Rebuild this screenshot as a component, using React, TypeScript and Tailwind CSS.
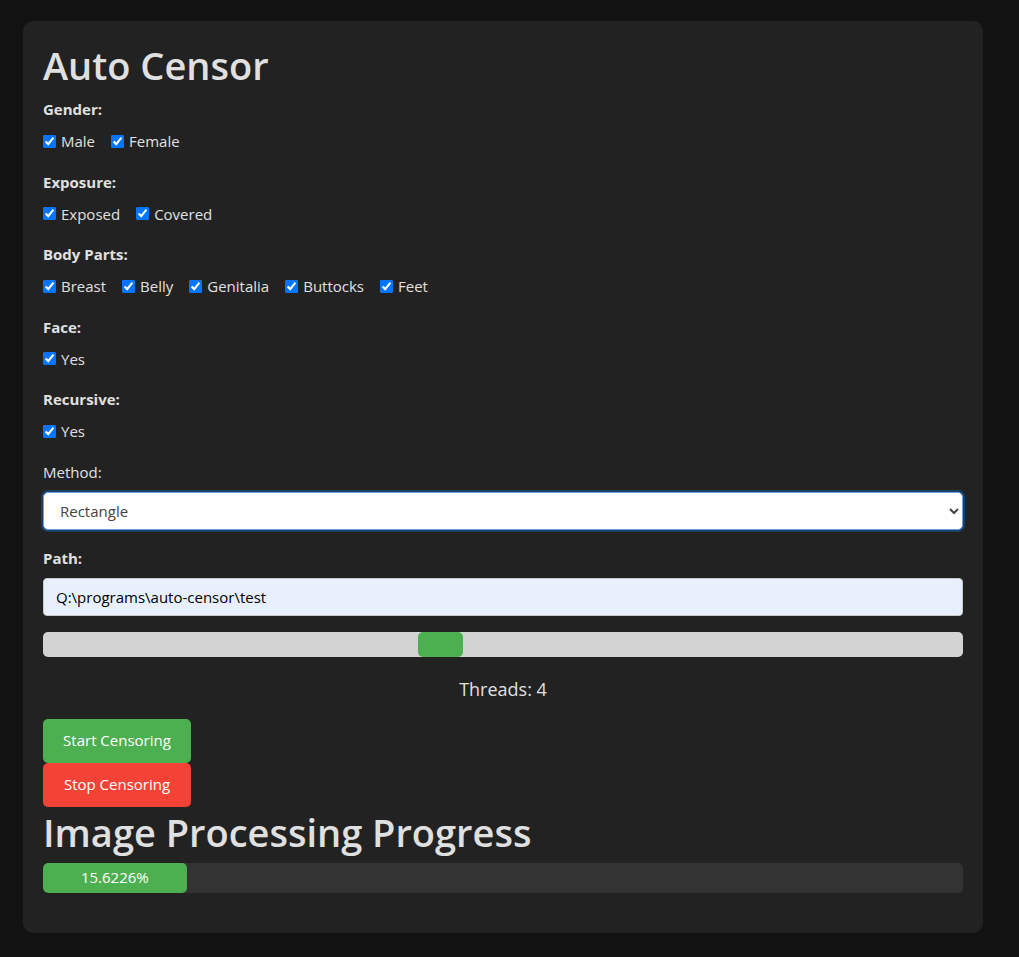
import React, { useState } from 'react';

const FONT = { fontFamily: '"Open Sans", "Noto Sans", sans-serif' };

type Group = { label: string; options: string[] };

const GROUPS: Group[] = [
  { label: 'Gender:', options: ['Male', 'Female'] },
  { label: 'Exposure:', options: ['Exposed', 'Covered'] },
  { label: 'Body Parts:', options: ['Breast', 'Belly', 'Genitalia', 'Buttocks', 'Feet'] },
  { label: 'Face:', options: ['Yes'] },
  { label: 'Recursive:', options: ['Yes'] },
];

const CheckGroup: React.FC<{ group: Group }> = ({ group }) => (
  <div className="flex flex-col gap-3">
    <div className="h-5 text-[15px] font-bold leading-5">{group.label}</div>
    <div className="flex h-5 items-center gap-4">
      {group.options.map((opt) => (
        <label key={opt} className="flex items-center text-[15px] leading-5">
          <input type="checkbox" defaultChecked className="m-0 mr-[5px] h-[13px] w-[13px] accent-[#0075ff]" />
          {opt}
        </label>
      ))}
    </div>
  </div>
);

export default function App() {
  const [threads, setThreads] = useState(4);
  const progress = 15.6226;

  return (
    <div className="min-h-[957px] w-full bg-[#121212] pt-[21px] pb-6 text-[#e0e0e0]" style={FONT}>
      <div className="ml-[23px] w-[960px] rounded-[10px] bg-[#222222] px-5 pt-5 pb-10">
        <h1 className="h-12 text-[38px] leading-[49px] font-semibold">Auto Censor</h1>

        <div className="mt-[10px] flex flex-col gap-[20.5px]">
          {GROUPS.map((g) => (
            <CheckGroup key={g.label} group={g} />
          ))}
        </div>

        <div className="mt-[20.5px] h-5 text-[15px] leading-5">Method:</div>
        <select
          defaultValue="Rectangle"
          className="mt-[10px] h-[38px] w-full rounded-[5px] border border-[#6aa1dd] bg-white px-3 text-[15px] text-[#444] outline-none ring-2 ring-[#1c3f66]"
          style={FONT}
        >
          <option>Rectangle</option>
          <option>Blur</option>
          <option>Pixelate</option>
        </select>

        <div className="mt-[18px] h-5 text-[15px] font-bold leading-5">Path:</div>
        <input
          type="text"
          defaultValue="Q:\programs\auto-censor\test"
          className="mt-[10px] block h-[38px] w-full rounded-[4px] border border-[#c8c8c8] bg-[#e8f0fe] px-3 text-[15px] text-black outline-none"
          style={FONT}
        />

        <input
          type="range"
          min={1}
          max={8}
          value={threads}
          onChange={(e) => setThreads(Number(e.target.value))}
          className="mt-4 block h-[25px] w-full cursor-pointer appearance-none rounded-[5px] bg-[#d3d3d3] outline-none [&::-webkit-slider-thumb]:h-[25px] [&::-webkit-slider-thumb]:w-[45px] [&::-webkit-slider-thumb]:appearance-none [&::-webkit-slider-thumb]:rounded-[5px] [&::-webkit-slider-thumb]:bg-[#4caf50]"
        />

        <div className="mt-[22px] h-5 text-center text-[18px] leading-5">Threads: {threads}</div>

        <div className="mt-5 flex flex-col items-start">
          <button className="h-11 w-[148px] rounded-[5px] bg-[#4caf50] text-[15px] text-white">Start Censoring</button>
          <button className="h-11 w-[148px] rounded-[5px] bg-[#f44336] text-[15px] text-white">Stop Censoring</button>
        </div>

        <h2 className="h-[49px] text-[38px] leading-[50px] font-semibold">Image Processing Progress</h2>

        <div className="mt-[7px] h-[30px] w-full overflow-hidden rounded-[5px] bg-[#333333]">
          <div
            className="flex h-full items-center justify-center rounded-[5px] bg-[#4caf50] text-[15px] text-white"
            style={{ width: `${progress}%` }}
          >
            {progress}%
          </div>
        </div>
      </div>
    </div>
  );
}
